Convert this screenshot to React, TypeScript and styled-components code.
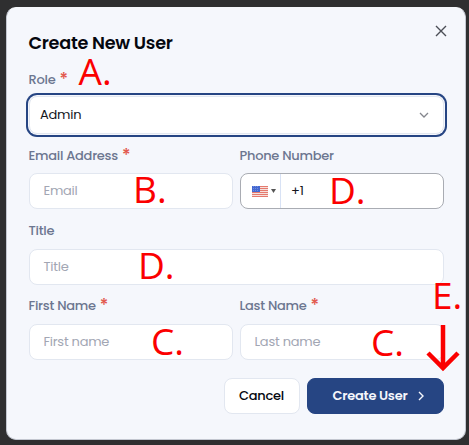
import React from 'react';
import styled, { createGlobalStyle } from 'styled-components';

const GlobalStyle = createGlobalStyle`
  * { box-sizing: border-box; }
  body {
    margin: 0;
    background: #2f2f30;
    font-family: Poppins, Inter, sans-serif;
    font-feature-settings: "cv11" 1;
    overflow: hidden;
  }
`;

const Backdrop = styled.main`
  position: relative;
  width: 469px;
  height: 445px;
  padding: 7px 3px 5px 6px;
  background: #2f2f30;
`;

const Dialog = styled.section`
  position: relative;
  height: 433px;
  padding: 21px 21.5px 26px 21.5px;
  border: 1px solid #c3c7d0;
  border-top-color: #f5f7fb;
  border-radius: 10px;
  background: #f5f7fc;
`;

const Heading = styled.h1`
  margin: 0;
  height: 28px;
  font-size: 17.6px;
  line-height: 28px;
  font-weight: 600;
  letter-spacing: -0.25px;
  color: #05070f;
  white-space: nowrap;
`;

const CloseButton = styled.button`
  position: absolute;
  top: 17px;
  right: 18px;
  width: 12px;
  height: 12px;
  padding: 0;
  border: 0;
  background: none;
  svg { display: block; }
`;

const FieldRow = styled.div<{ $top: number; $gap: number }>`
  display: flex;
  gap: 7px;
  margin-top: ${(p) => p.$top}px;
  label { margin-bottom: ${(p) => p.$gap}px; }
`;

const Field = styled.div`
  flex: 1;
  min-width: 0;
`;

const Label = styled.label`
  display: flex;
  height: 20px;
  line-height: 20px;
  font-size: 13px;
  font-weight: 500;
  letter-spacing: -0.27px;
  color: #6c7690;
  white-space: nowrap;
`;

const Required = styled.span`
  margin-left: 4px;
  font-size: 17px;
  line-height: 18px;
  letter-spacing: 0;
  color: #e2574c;
`;

const Control = styled.div<{ $border?: string; $value?: boolean }>`
  display: flex;
  align-items: center;
  height: 36px;
  padding: 0 14px;
  border: 1px solid ${(p) => p.$border ?? '#e2e7f0'};
  border-radius: 8px;
  background: #fff;
  font-size: 13px;
  letter-spacing: -0.25px;
  color: ${(p) => (p.$value ? '#15161d' : '#a2a6b3')};
  white-space: nowrap;
`;

const Select = styled(Control)`
  justify-content: space-between;
  height: 38px;
  padding: 0 14px 1px 10.5px;
  box-shadow: 0 0 0 1px #f5f7fc, 0 0 0 3px #264583;
`;

const Country = styled.span`
  display: flex;
  align-items: center;
  gap: 3px;
  width: 41px;
  height: 34px;
  margin-left: -15px;
  margin-right: 10.5px;
  padding-left: 12px;
  border-right: 1px solid #d8e2f5;
`;

const Actions = styled.div`
  display: flex;
  justify-content: flex-end;
  gap: 7px;
  margin-top: 18px;
`;

const Button = styled.button<{ $primary?: boolean }>`
  display: flex;
  align-items: center;
  justify-content: center;
  gap: 11px;
  width: ${(p) => (p.$primary ? 137 : 76)}px;
  height: 36px;
  padding: ${(p) => (p.$primary ? '0 0 0 7px' : '0')};
  border: 1px solid ${(p) => (p.$primary ? '#264583' : '#e2e7f0')};
  border-radius: 8px;
  background: ${(p) => (p.$primary ? '#264583' : '#fff')};
  color: ${(p) => (p.$primary ? '#f5f7fc' : '#05070f')};
  font-family: inherit;
  font-feature-settings: inherit;
  font-size: 13px;
  font-weight: ${(p) => (p.$primary ? 600 : 500)};
  letter-spacing: -0.25px;
  white-space: nowrap;
`;

const Note = styled.span<{ $x: number; $y: number }>`
  position: absolute;
  left: ${(p) => p.$x}px;
  top: ${(p) => p.$y}px;
  font: 400 37px/50px "Open Sans", sans-serif;
  color: #fb0000;
  white-space: nowrap;
  pointer-events: none;
`;

const Arrow = styled.svg`
  position: absolute;
  left: 426px;
  top: 323px;
`;

const notes = [
  { text: 'A.', x: 78.5, y: 46 },
  { text: 'B.', x: 133, y: 164 },
  { text: 'D.', x: 329, y: 165 },
  { text: 'D.', x: 138, y: 240 },
  { text: 'E.', x: 432, y: 270 },
  { text: 'C.', x: 151, y: 316 },
  { text: 'C.', x: 371, y: 317 },
];

function Flag() {
  return (
    <svg width="16" height="11" viewBox="0 0 16 11">
      <rect width="16" height="11" fill="#f6e0dc" />
      {[0, 2, 4, 6, 8, 10].map((y) => (
        <rect key={y} y={y} width="16" height="1" fill="#e57a6e" />
      ))}
      <rect width="8" height="6" fill="#4468d0" />
      {[1, 3, 5].map((y) => (
        <path key={y} d={`M1 ${y - 0.5}h6`} stroke="#8ea5ea" strokeWidth=".6" strokeDasharray="1 1" />
      ))}
    </svg>
  );
}

export default function App() {
  return (
    <>
      <GlobalStyle />
      <Backdrop>
        <Dialog>
          <CloseButton aria-label="Close">
            <svg width="12" height="12" viewBox="0 0 12 12" fill="none" stroke="#4b4d56" strokeWidth="1.4">
              <path d="M1 1l10 10M11 1L1 11" />
            </svg>
          </CloseButton>
          <Heading>Create New User</Heading>
          <FieldRow $top={13} $gap={6}>
            <Field>
              <Label>Role<Required>*</Required></Label>
              <Select $value>
                Admin
                <svg width="10" height="6" viewBox="0 0 10 6" fill="none" stroke="#84868d" strokeWidth="1.3">
                  <path d="M1 1l4 4 4-4" />
                </svg>
              </Select>
            </Field>
          </FieldRow>
          <FieldRow $top={12} $gap={7}>
            <Field>
              <Label>Email Address<Required>*</Required></Label>
              <Control>Email</Control>
            </Field>
            <Field>
              <Label>Phone Number</Label>
              <Control $border="#a9acb3" $value>
                <Country>
                  <Flag />
                  <svg width="5" height="4" viewBox="0 0 5 4"><path d="M0 0h5L2.5 4z" fill="#555" /></svg>
                </Country>
                +1
              </Control>
            </Field>
          </FieldRow>
          <FieldRow $top={12} $gap={8}>
            <Field>
              <Label>Title</Label>
              <Control>Title</Control>
            </Field>
          </FieldRow>
          <FieldRow $top={11} $gap={8}>
            <Field>
              <Label>First Name<Required>*</Required></Label>
              <Control>First name</Control>
            </Field>
            <Field>
              <Label>Last Name<Required>*</Required></Label>
              <Control>Last name</Control>
            </Field>
          </FieldRow>
          <Actions>
            <Button>Cancel</Button>
            <Button $primary>
              Create User
              <svg width="6" height="10" viewBox="0 0 6 10" fill="none" stroke="#f5f7fc" strokeWidth="1.4">
                <path d="M1 1l4 4-4 4" />
              </svg>
            </Button>
          </Actions>
        </Dialog>
        {notes.map((n) => (
          <Note key={`${n.x}-${n.y}`} $x={n.x} $y={n.y}>{n.text}</Note>
        ))}
        <Arrow width="36" height="50" viewBox="0 0 36 50" fill="none" stroke="#fb0000" strokeWidth="4.5">
          <path d="M17 2v43M2 30l15 15 15-15" />
        </Arrow>
      </Backdrop>
    </>
  );
}
